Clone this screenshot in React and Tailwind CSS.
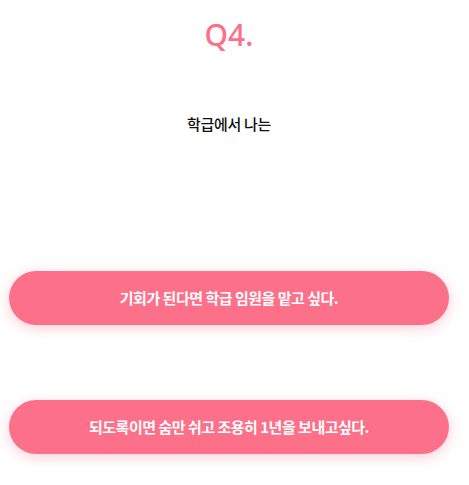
import React from "react";

const answers = [
  "기회가 된다면 학급 임원을 맡고 싶다.",
  "되도록이면 숨만 쉬고 조용히 1년을 보내고싶다.",
];

const App = () => {
  return (
    <div className="min-h-[485px] bg-white pl-[9px] pr-[20px] pt-[17px] font-['Noto_Sans','Noto_Sans_CJK_KR',sans-serif]">
      <h1 className="text-center text-[30px] leading-[36px] font-medium text-[#fc7089]">
        Q4.
      </h1>
      <p className="mt-[61px] text-center text-[15px] leading-[20px] font-medium tracking-[-0.3px] text-[#111] font-['Noto_Sans_CJK_KR',sans-serif]">
        학급에서 나는
      </p>
      <div className="mt-[137px] flex flex-col gap-[75px]">
        {answers.map((a) => (
          <button
            key={a}
            className="flex h-[54px] w-full items-center justify-center rounded-full bg-[#fc7089] text-[15px] font-bold tracking-[-0.5px] text-white shadow-[0_3px_14px_rgba(252,112,137,0.35)] font-['Noto_Sans_CJK_KR',sans-serif]"
          >
            {a}
          </button>
        ))}
      </div>
    </div>
  );
};

export default App;
